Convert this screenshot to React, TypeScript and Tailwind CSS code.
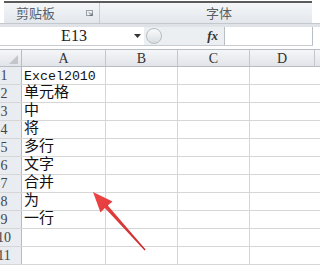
const rows = ["Excel2010", "单元格", "中", "将", "多行", "文字", "合并", "为", "一行", "", ""];
const cols = [
  { name: "A", w: "w-[84px]" },
  { name: "B", w: "w-[72px]" },
  { name: "C", w: "w-[72px]" },
  { name: "D", w: "w-[65px]" },
];

const mono = "[font-family:'Liberation_Mono','Noto_Sans_CJK_SC',monospace]";
const serif = "[font-family:'Liberation_Serif','Noto_Sans_CJK_SC',serif]";

export default function App() {
  return (
    <div className="relative h-[277px] w-[320px] overflow-hidden bg-white">
      {/* ribbon group labels */}
      <div className="pt-[1px]">
        <div className="ml-[4px] flex h-[22px] w-[308px] border-t-2 border-[#5b5b5b] bg-gradient-to-b from-[#f4f6f8] to-[#e3e7ec] [font-family:'Noto_Sans_CJK_SC',sans-serif] text-[13px] text-[#5a5f66]">
          <div className="flex w-[96px] items-center justify-between border-r border-[#c9cdd3] pl-[12px] pr-[5px]">
            <span>剪贴板</span>
            <svg width="8" height="7" viewBox="0 0 8 7">
              <rect x="0.5" y="0.5" width="6" height="5" fill="none" stroke="#9aa0a8" />
              <path d="M3 2.5 L6 5.5 M6 3 V5.5 H3.5" stroke="#6a7078" fill="none" />
            </svg>
          </div>
          <div className="flex flex-1 items-center pl-[106px]">
            <span>字体</span>
          </div>
        </div>
      </div>
      <div className="h-[4px] border-t border-[#c3c8cf] bg-[#dfe3e8]" />

      {/* formula bar */}
      <div className="flex h-[19px] w-[313px] border-b border-[#c8ccd2] bg-[#eceff2]">
        <div className={`relative flex w-[144px] items-center justify-center bg-white ${serif} text-[16px] text-[#222]`}>
          <span className="pl-[4px]">E13</span>
          <svg className="absolute right-[3px] top-[7px]" width="7" height="4" viewBox="0 0 7 4">
            <path d="M0 0 H7 L3.5 4 Z" fill="#333" />
          </svg>
        </div>
        <div className="flex w-[20px] items-center justify-center">
          <div className="h-[16px] w-[16px] rounded-full border border-[#b6bbc2] bg-gradient-to-b from-[#fbfbfc] to-[#d9dde2]" />
        </div>
        <div className="flex w-[61px] items-center justify-end border-r border-[#b9bec5] pr-[6px] [font-family:'Liberation_Serif',serif] text-[13px] font-bold italic text-[#333]">
          fx
        </div>
        <div className="flex-1 border-r border-[#b9bec5] bg-white" />
      </div>
      <div className="h-[3px] bg-white" />

      {/* grid */}
      <div className="-ml-[13px]">
        <div className={`flex h-[18px] border-y border-[#b7bcc3] bg-gradient-to-b from-[#f5f6f8] to-[#e1e4e9] ${serif} text-[14px] text-[#333]`}>
          <div className="relative w-[35px] border-r border-[#b7bcc3]">
            <svg className="absolute bottom-[2px] right-[3px]" width="9" height="9" viewBox="0 0 9 9">
              <path d="M9 0 V9 H0 Z" fill="#c3c7cd" />
            </svg>
          </div>
          {cols.map((c) => (
            <div key={c.name} className={`${c.w} flex items-center justify-center border-r border-[#c3c7cd]`}>
              {c.name}
            </div>
          ))}
        </div>
        {rows.map((t, i) => (
          <div key={i} className="flex h-[18px] border-b border-[#d6d6d6]">
            <div className={`flex w-[35px] items-end justify-center border-r border-[#b7bcc3] bg-[#e9ecf0] ${serif} text-[14px] leading-[16px] text-[#444]`}>
              {i + 1}
            </div>
            <div
              className={`flex w-[84px] items-end border-r border-[#d6d6d6] pl-[2px] ${mono} ${
                i === 0 ? "text-[13.3px] leading-[15px]" : "text-[15px] leading-[17px]"
              } text-[#111]`}
            >
              {t}
            </div>
            <div className="w-[72px] border-r border-[#d6d6d6]" />
            <div className="w-[72px] border-r border-[#d6d6d6]" />
            <div className="w-[65px]" />
          </div>
        ))}
      </div>

      {/* red arrow annotation */}
      <svg className="absolute left-0 top-0" width="320" height="277" viewBox="0 0 320 277">
        <defs>
          <linearGradient id="ar" x1="0" y1="0" x2="1" y2="1">
            <stop offset="0" stopColor="#f04545" />
            <stop offset="1" stopColor="#c82a2a" />
          </linearGradient>
        </defs>
        <polygon
          points="93,192 112.5,201.5 107.8,205.4 145.6,249.4 144.6,250.4 104.9,208 100.5,212.4"
          fill="url(#ar)"
        />
      </svg>
    </div>
  );
}
